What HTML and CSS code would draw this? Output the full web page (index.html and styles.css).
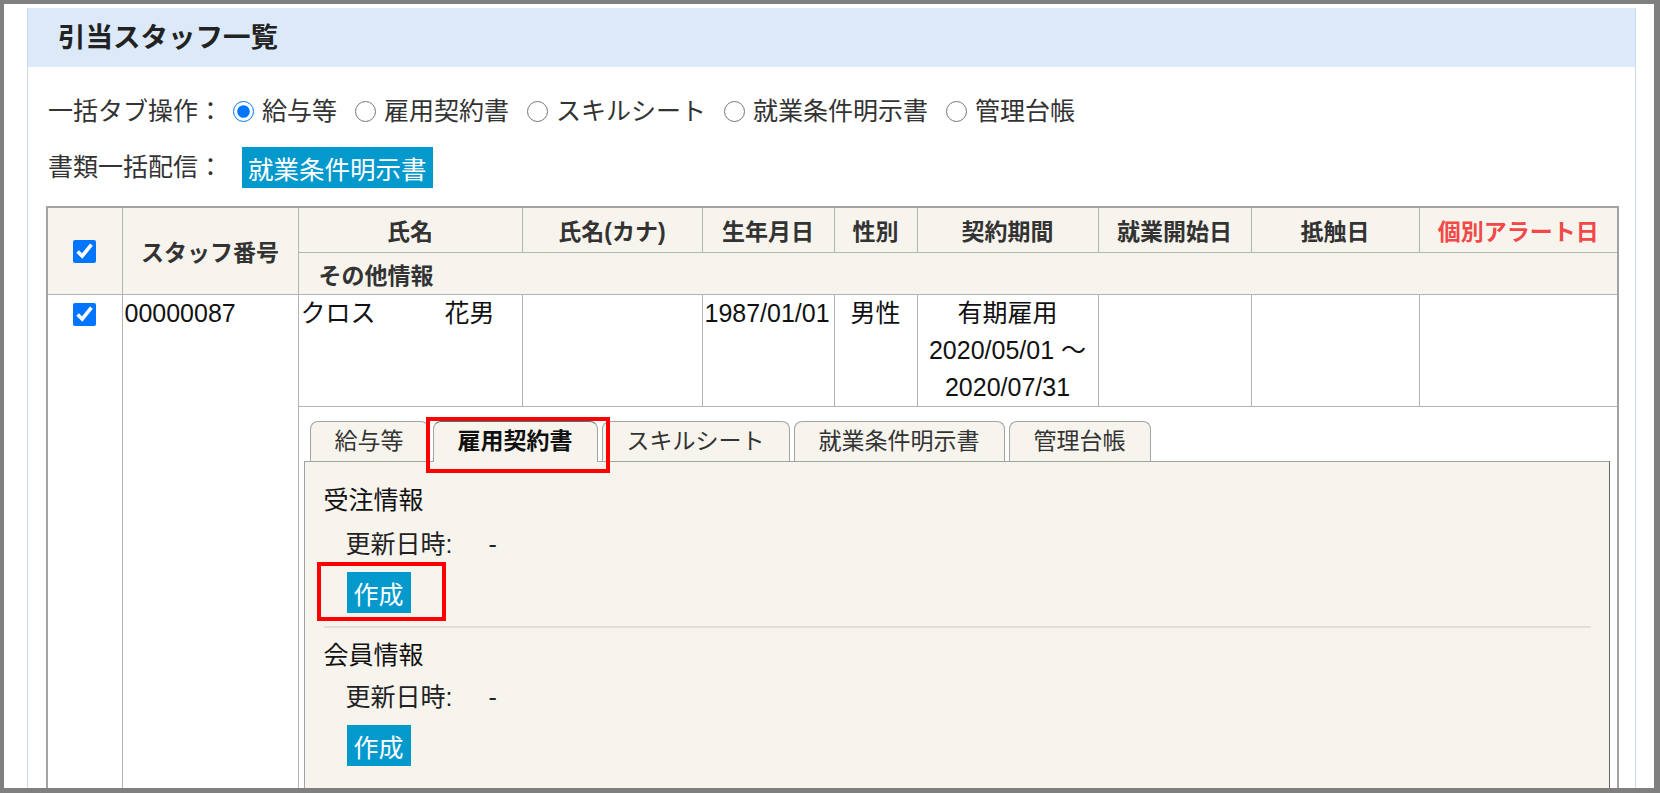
FILE: index.html
```html
<!DOCTYPE html>
<html lang="ja">

<head>
    <meta charset="UTF-8">
    <meta name="viewport" content="width=device-width, initial-scale=1.0">
    <title>引当スタッフ一覧</title>
    <link rel="stylesheet" href="styles.css">
</head>

<body>
    <div class="frame">
        <div class="box">
            <h2 class="box-title">引当スタッフ一覧</h2>
            <div class="box-body">
                <div class="bulk-row">
                    <span class="row-label">一括タブ操作：</span>
                    <label class="opt"><input type="radio" name="bulk-tab" checked>給与等</label>
                    <label class="opt"><input type="radio" name="bulk-tab">雇用契約書</label>
                    <label class="opt"><input type="radio" name="bulk-tab">スキルシート</label>
                    <label class="opt"><input type="radio" name="bulk-tab">就業条件明示書</label>
                    <label class="opt"><input type="radio" name="bulk-tab">管理台帳</label>
                </div>
                <div class="bulk-row send-row">
                    <span class="row-label">書類一括配信：</span>
                    <button class="btn btn-send">就業条件明示書</button>
                </div>

                <table class="staff-table">
                    <colgroup>
                        <col style="width: 75px">
                        <col style="width: 176px">
                        <col style="width: 224px">
                        <col style="width: 180px">
                        <col style="width: 132px">
                        <col style="width: 83px">
                        <col style="width: 181px">
                        <col style="width: 153px">
                        <col style="width: 168px">
                        <col>
                    </colgroup>
                    <thead>
                        <tr class="head-main">
                            <th rowspan="2"><input type="checkbox" class="check" checked></th>
                            <th rowspan="2">スタッフ番号</th>
                            <th>氏名</th>
                            <th>氏名(カナ)</th>
                            <th>生年月日</th>
                            <th>性別</th>
                            <th>契約期間</th>
                            <th>就業開始日</th>
                            <th>抵触日</th>
                            <th class="alert">個別アラート日</th>
                        </tr>
                        <tr class="head-sub">
                            <th colspan="8" class="th-left">その他情報</th>
                        </tr>
                    </thead>
                    <tbody>
                        <tr class="staff-row">
                            <td rowspan="2" class="td-check"><input type="checkbox" class="check" checked></td>
                            <td rowspan="2">00000087</td>
                            <td><span>クロス</span><span class="given-name">花男</span></td>
                            <td></td>
                            <td>1987/01/01</td>
                            <td class="center">男性</td>
                            <td class="center">有期雇用<br>2020/05/01 ～ 2020/07/31</td>
                            <td></td>
                            <td></td>
                            <td></td>
                        </tr>
                        <tr>
                            <td colspan="8" class="td-tabs">
                                <ul class="tabs">
                                    <li class="tab">給与等</li>
                                    <li class="tab active marked">雇用契約書</li>
                                    <li class="tab">スキルシート</li>
                                    <li class="tab">就業条件明示書</li>
                                    <li class="tab">管理台帳</li>
                                </ul>
                                <div class="tab-panel">
                                    <div class="doc-block">
                                        <div class="doc-title">受注情報</div>
                                        <div class="doc-updated"><span class="doc-label">更新日時:</span>-</div>
                                        <button class="btn btn-create marked">作成</button>
                                    </div>
                                    <div class="doc-block">
                                        <div class="doc-title">会員情報</div>
                                        <div class="doc-updated"><span class="doc-label">更新日時:</span>-</div>
                                        <button class="btn btn-create">作成</button>
                                    </div>
                                </div>
                            </td>
                        </tr>
                    </tbody>
                </table>
            </div>
        </div>
    </div>
</body>

</html>
```

FILE: styles.css
```css
body {
    margin: 0;
    font-family: "Liberation Sans", "Noto Sans CJK JP", sans-serif;
    font-size: 25px;
    color: #333;
    background: #fff;
}

.frame {
    height: 793px;
    box-sizing: border-box;
    border: 4px solid #7f7f7f;
    border-right-width: 6px;
    border-bottom-width: 5px;
    padding: 4px 18px 0 23px;
    overflow: hidden;
}

.box {
    height: 100%;
    border-left: 1px solid #c7dcf2;
    border-right: 1px solid #c7dcf2;
}

.box-title {
    margin: 0;
    height: 59px;
    line-height: 59px;
    padding-left: 30px;
    font-size: 27.5px;
    font-weight: bold;
    color: #222;
    background: #dce9f8;
}

.box-body {
    padding: 0 16px 0 18px;
}

/* bulk operation rows */
.bulk-row {
    display: flex;
    align-items: center;
    margin-top: 26px;
    padding-left: 2px;
    line-height: 37px;
}

.send-row {
    margin-top: 17px;
}

.opt {
    display: flex;
    align-items: center;
    margin-left: 18px;
}

.opt:first-of-type {
    margin-left: 10px;
}

.opt input {
    width: 21px;
    height: 21px;
    margin: 0 8px 0 0;
    accent-color: #0075ff;
}

.btn {
    border: none;
    border-radius: 0;
    height: 41px;
    padding: 0 7px;
    font-family: inherit;
    font-size: 25px;
    color: #fff;
    background: #0399cd;
    cursor: pointer;
}

.btn-send {
    margin-left: 19px;
    font-size: 25.5px;
    padding: 0 6px;
}

/* staff table */
.staff-table {
    width: 100%;
    margin-top: 18px;
    table-layout: fixed;
    border-collapse: collapse;
    border: 2px solid #a3a3a3;
}

.staff-table th,
.staff-table td {
    border: 1px solid #b4b4b4;
    padding: 0 2px;
}

.staff-table th {
    font-size: 23px;
    font-weight: bold;
    color: #333;
    background: #f7f4ee;
}

.head-main th {
    height: 44px;
}

.head-sub th {
    height: 41px;
}

.staff-table th.th-left {
    text-align: left;
    padding-left: 20px;
}

.staff-table th.alert {
    color: #f24848;
}

.check {
    display: block;
    width: 23px;
    height: 23px;
    margin: 0 auto;
    accent-color: #0075ff;
}

.staff-table td {
    vertical-align: top;
    line-height: 37px;
    color: #111;
}

.staff-table td.center {
    text-align: center;
}

.staff-table td.td-check {
    padding-top: 8px;
}

.given-name {
    margin-left: 69px;
}

.staff-table td.td-tabs {
    padding: 14px 7px 0 5px;
}

/* document tabs */
.tabs {
    display: flex;
    align-items: flex-end;
    gap: 4px;
    margin: 0 0 0 6px;
    padding: 0;
    list-style: none;
}

.tab {
    position: relative;
    height: 40px;
    box-sizing: border-box;
    padding: 0 24px;
    line-height: 39px;
    font-size: 23px;
    color: #333;
    background: #f7f4ee;
    border: 1px solid #a3a3a3;
    border-bottom: none;
    border-radius: 8px 8px 0 0;
}

.tab.active {
    z-index: 1;
    height: 41px;
    margin-bottom: -1px;
    font-weight: bold;
    color: #111;
    border-top-color: #2f7f80;
}

.tab-panel {
    border: 1px solid #a3a3a3;
    border-right-color: #666;
    background: #f7f4ee;
    padding: 20px 18px 60px 19px;
}

.doc-block {
    padding-bottom: 13px;
}

.doc-block + .doc-block {
    border-top: 2px solid #e2dfd8;
    padding-top: 9px;
}

.doc-title {
    line-height: 37px;
    margin-bottom: 7px;
}

.doc-block + .doc-block .doc-title {
    margin-bottom: 5px;
}

.doc-updated {
    line-height: 37px;
    padding-left: 22px;
    color: #222;
}

.doc-label {
    display: inline-block;
    width: 143px;
}

.btn-create {
    position: relative;
    display: block;
    margin: 9px 0 0 23px;
}

/* red highlight frames */
.marked::after {
    content: "";
    position: absolute;
    border: 4px solid #f00;
    pointer-events: none;
}

.tab.marked::after {
    left: -8px;
    top: -5px;
    right: -13px;
    bottom: -11px;
}

.btn-create.marked::after {
    left: -30px;
    top: -10px;
    right: -35px;
    bottom: -8px;
}
```
